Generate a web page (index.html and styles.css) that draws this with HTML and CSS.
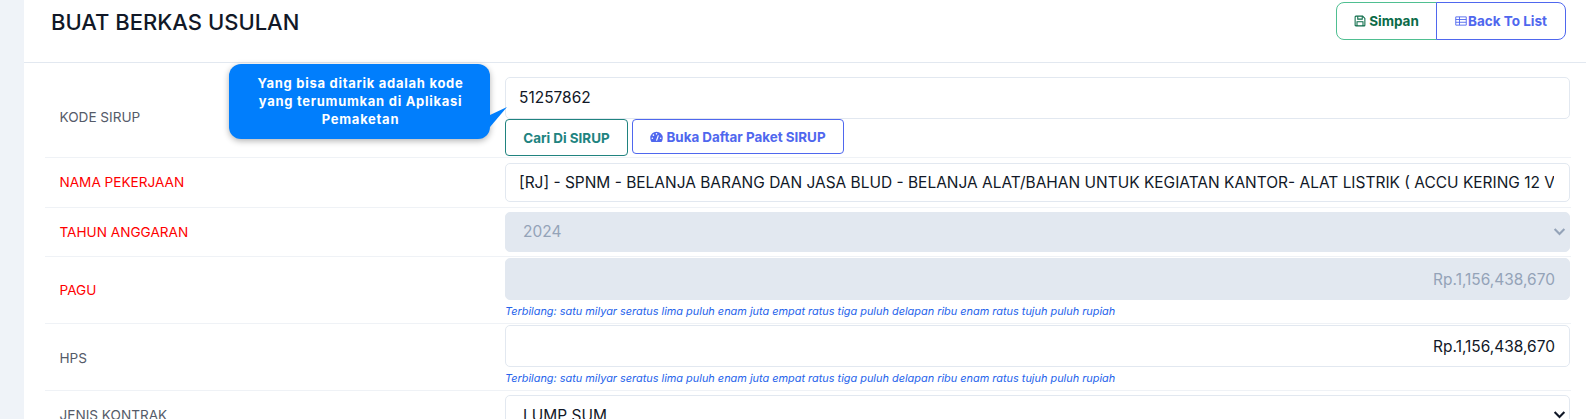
FILE: index.html
```html
<!DOCTYPE html>
<html lang="id">
<head>
<meta charset="utf-8">
<title>Buat Berkas Usulan</title>
<link rel="stylesheet" href="styles.css">
</head>
<body>
<div class="page">
  <main class="card">
    <header class="head">
      <h1>BUAT BERKAS USULAN</h1>
      <div class="actions">
        <button class="act act-green" type="button">
          <svg class="ico" viewBox="0 0 16 16"><path d="M2.500 1.500h9l3 3v9a1 1 0 0 1-1 1h-11a1 1 0 0 1-1-1v-11a1 1 0 0 1 1-1z" fill="none" stroke="currentColor" stroke-width="1.400"/><path d="M5 1.500v4h6v-4M4 14.500v-5.500h8v5.500" fill="none" stroke="currentColor" stroke-width="1.400"/></svg>Simpan
        </button>
        <button class="act act-blue" type="button">
          <svg class="ico" viewBox="0 0 16 16"><path d="M1 2.500h14v11h-14zM1 6h14M1 9.700h14M6 2.500v11" fill="none" stroke="currentColor" stroke-width="1.200"/></svg>Back To List
        </button>
      </div>
    </header>
    <form class="form">
      <div class="row row-sirup">
        <label class="lbl">KODE SIRUP</label>
        <div class="ctl">
          <input class="inp inp-sirup" type="text" value="51257862">
          <div class="btns">
            <button class="btn btn-teal" type="button">Cari Di SIRUP</button>
            <button class="btn btn-blue" type="button">
              <svg class="ico ico-gauge" viewBox="0 0 16 14"><path d="M8 0.500a7.700 7.700 0 0 0-7.700 7.700c0 1.700.5 3.300 1.300 4.500a1 1 0 0 0 .8.500h11.200a1 1 0 0 0 .8-.5c.8-1.200 1.300-2.800 1.300-4.500A7.700 7.700 0 0 0 8 .5z" fill="currentColor"/><path d="M8 11.500L10.300 5" stroke="#fff" stroke-width="1.500"/><circle cx="8" cy="3.100" r="1" fill="#fff"/><circle cx="4.200" cy="4.700" r="1" fill="#fff"/><circle cx="2.900" cy="8.500" r="1" fill="#fff"/><circle cx="13.100" cy="8.500" r="1" fill="#fff"/></svg>Buka Daftar Paket SIRUP
            </button>
          </div>
        </div>
      </div>
      <div class="row row-nama">
        <label class="lbl req">NAMA PEKERJAAN</label>
        <div class="ctl">
          <input class="inp inp-nama" type="text" value="[RJ] - SPNM - BELANJA BARANG DAN JASA BLUD - BELANJA ALAT/BAHAN UNTUK KEGIATAN KANTOR- ALAT LISTRIK ( ACCU KERING 12 VOLT )">
        </div>
      </div>
      <div class="row row-tahun">
        <label class="lbl req">TAHUN ANGGARAN</label>
        <div class="ctl">
          <div class="sel sel-off">2024<svg class="chev" viewBox="0 0 16 16"><path d="M2 5l6 6 6-6" fill="none" stroke="currentColor" stroke-width="2.600"/></svg></div>
        </div>
      </div>
      <div class="row row-pagu">
        <label class="lbl req">PAGU</label>
        <div class="ctl">
          <input class="inp inp-off inp-num" type="text" value="Rp.1,156,438,670" disabled>
          <small class="say">Terbilang: satu milyar seratus lima puluh enam juta empat ratus tiga puluh delapan ribu enam ratus tujuh puluh rupiah</small>
        </div>
      </div>
      <div class="row row-hps">
        <label class="lbl">HPS</label>
        <div class="ctl">
          <input class="inp inp-num" type="text" value="Rp.1,156,438,670">
          <small class="say">Terbilang: satu milyar seratus lima puluh enam juta empat ratus tiga puluh delapan ribu enam ratus tujuh puluh rupiah</small>
        </div>
      </div>
      <div class="row row-jenis">
        <label class="lbl">JENIS KONTRAK</label>
        <div class="ctl">
          <div class="sel">LUMP SUM<svg class="chev" viewBox="0 0 16 16"><path d="M2 5l6 6 6-6" fill="none" stroke="currentColor" stroke-width="2.600"/></svg></div>
        </div>
      </div>
    </form>
    <div class="tip">Yang bisa ditarik adalah kode yang terumumkan di Aplikasi Pemaketan<svg class="tail" viewBox="0 0 17 21"><path d="M0 8L17 0L0 20z" fill="#017efc"/></svg></div>
  </main>
</div>
</body>
</html>
```
FILE: styles.css
```css
* { box-sizing: border-box; }
html, body { margin: 0; height: 100%; overflow: hidden; }
body { background: #eff3f8; font-family: Inter, "Noto Sans", sans-serif; color: #111827; }
.page { padding-left: 24px; height: 419px; overflow: hidden; }
.card { position: relative; background: #fff; height: 700px; }
.head { display: flex; justify-content: space-between; height: 63px; padding: 3px 20px 0 27px; border-bottom: 1px solid #e2e8f0; }
h1 { margin: 0; font-size: 22px; font-weight: 500; line-height: 38px; color: #111827; }
.actions { display: flex; height: 38px; margin-top: -1px; }
.act { display: flex; align-items: center; justify-content: center; height: 38px; background: #fff; font: 700 13.500px Inter, sans-serif; padding: 0; border: 1px solid; }
.act-green { width: 101px; color: #0b6b48; border-color: #4fbf91; border-radius: 8px 0 0 8px; gap: 3px; }
.act-blue { width: 130px; color: #4f67ee; border-color: #4f67ee; border-radius: 0 8px 8px 0; margin-left: -1px; gap: 1px; }
.ico { width: 12px; height: 12px; flex: none; }
.form { padding: 0 15px 0 21px; }
.row { display: grid; grid-template-columns: 460px 1fr; border-bottom: 1px solid #eff2f6; }
.lbl { display: flex; align-items: center; padding-left: 14.500px; font-size: 13.600px; color: #555b69; }
.req { color: #fe0000; }
.ctl { min-width: 0; padding-right: 1px; }
.row-sirup { height: 95px; padding-top: 14px; }
.row-nama { height: 50px; padding-top: 5px; }
.row-nama .lbl { padding-bottom: 6px; }
.row-tahun { height: 49px; padding-top: 4px; }
.row-tahun .lbl { padding-bottom: 4px; }
.row-pagu { height: 67px; padding-top: 1px; }
.row-pagu .lbl { padding-bottom: 2px; }
.row-hps { height: 67px; padding-top: 1px; }
.row-jenis { height: 70px; padding-top: 4px; }
.row-jenis .lbl { align-items: flex-start; padding-top: 12px; }
.inp, .sel { display: block; width: 100%; height: 42px; padding: 0 13px; border: 1px solid #e2e8f0; border-radius: 5px; background: #fff; color: #111827; font: 400 15.470px/40px Inter, sans-serif; outline: none; }
.inp-sirup { padding-bottom: 2px; }
.inp-nama { height: 39px; padding-right: 15.500px; }
.inp-num { text-align: right; padding-right: 14px; }
.inp-off { background: #e2e8f0; color: #94a3b8; }
.inp-off:disabled { -webkit-text-fill-color: #94a3b8; opacity: 1; }
.sel { position: relative; padding-left: 17px; }
.sel-off { height: 40px; line-height: 38px; background: #e2e8f0; color: #94a3b8; }
.chev { position: absolute; right: 3px; top: 12px; width: 13px; height: 13px; }
.btns { display: flex; gap: 4px; align-items: flex-start; }
.btn { display: inline-flex; align-items: center; justify-content: center; background: #fff; font: 700 13.400px Inter, sans-serif; border: 1px solid; border-radius: 4px; padding: 0; }
.btn-teal { width: 123px; height: 37px; color: #20837f; border-color: #20837f; }
.btn-blue { width: 212px; height: 35px; color: #4f67ee; border-color: #4f67ee; gap: 3px; }
.ico-gauge { width: 13px; }
.say { display: block; margin-top: 4px; font-size: 10.920px; line-height: 14px; font-style: italic; color: #2563eb; white-space: nowrap; }
.tip { position: absolute; left: 205px; top: 64px; width: 261px; height: 75px; padding: 10px 19px 10px 21px; background: #017efc; color: #fff; border-radius: 12px; box-shadow: 0 2px 6px rgba(0,0,0,.3); font: 700 13px/18px Inter, sans-serif; letter-spacing: .72px; text-align: center; }
.tail { position: absolute; left: 261px; top: 43px; width: 17px; height: 21px; }
```
